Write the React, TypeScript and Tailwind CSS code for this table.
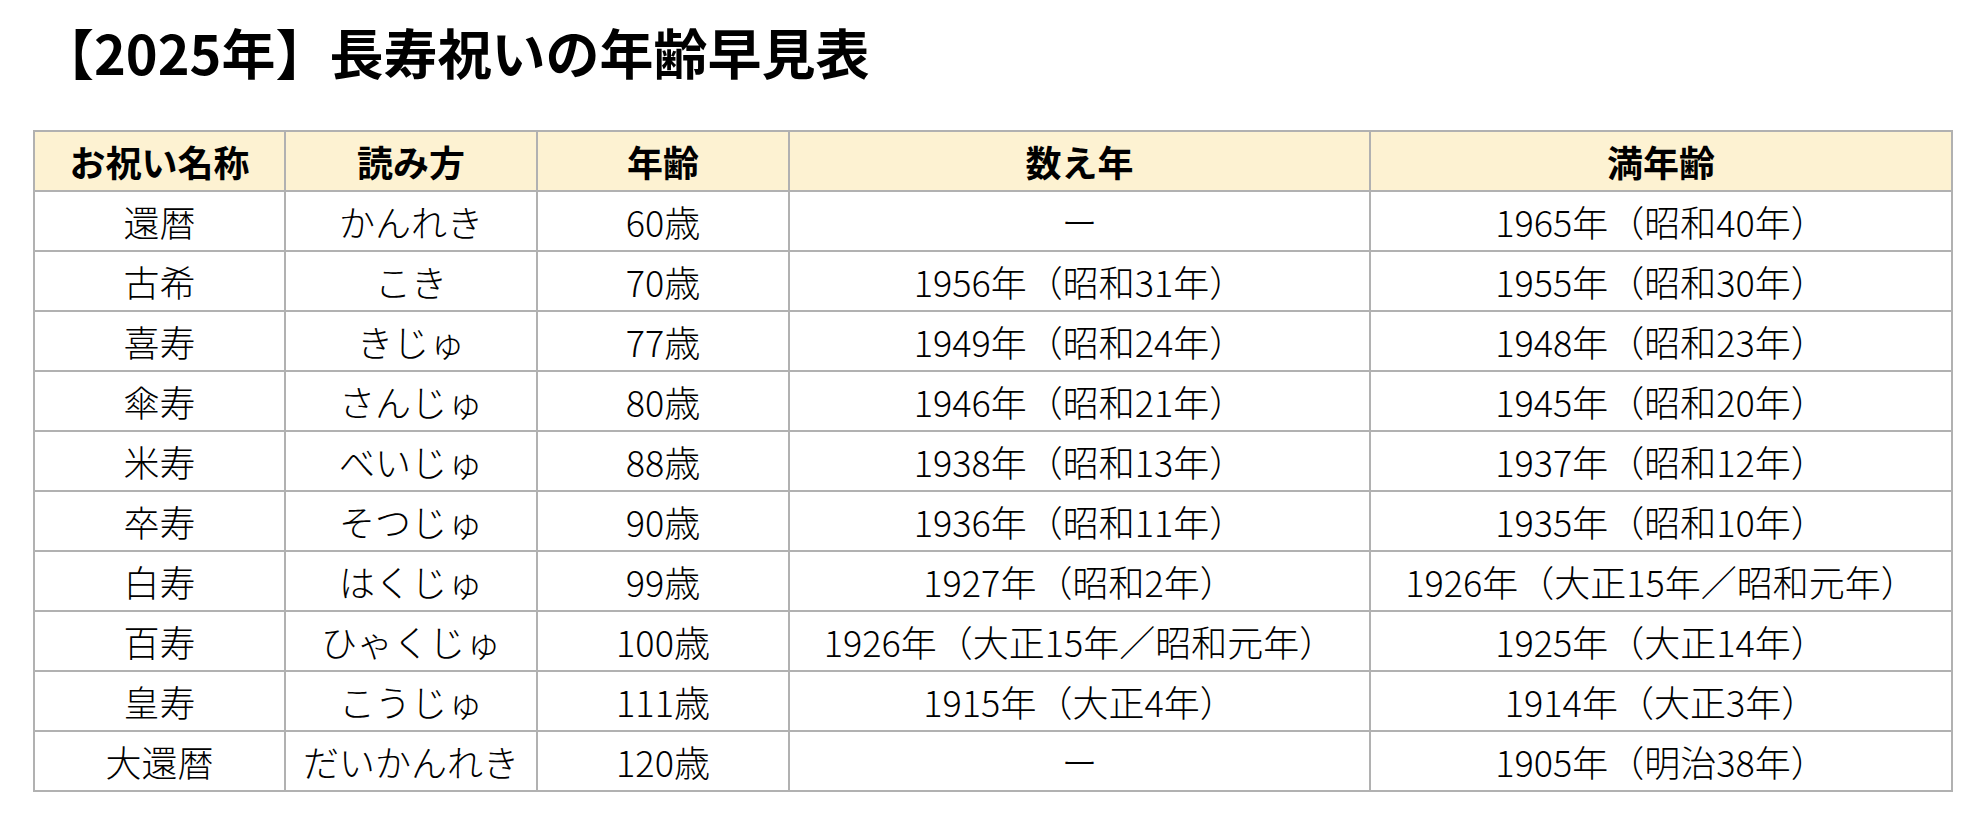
import React from "react";

type Row = {
  name: string;
  reading: string;
  age: string;
  kazoe: string;
  man: string;
};

const rows: Row[] = [
  { name: "還暦", reading: "かんれき", age: "60歳", kazoe: "ー", man: "1965年（昭和40年）" },
  { name: "古希", reading: "こき", age: "70歳", kazoe: "1956年（昭和31年）", man: "1955年（昭和30年）" },
  { name: "喜寿", reading: "きじゅ", age: "77歳", kazoe: "1949年（昭和24年）", man: "1948年（昭和23年）" },
  { name: "傘寿", reading: "さんじゅ", age: "80歳", kazoe: "1946年（昭和21年）", man: "1945年（昭和20年）" },
  { name: "米寿", reading: "べいじゅ", age: "88歳", kazoe: "1938年（昭和13年）", man: "1937年（昭和12年）" },
  { name: "卒寿", reading: "そつじゅ", age: "90歳", kazoe: "1936年（昭和11年）", man: "1935年（昭和10年）" },
  { name: "白寿", reading: "はくじゅ", age: "99歳", kazoe: "1927年（昭和2年）", man: "1926年（大正15年／昭和元年）" },
  { name: "百寿", reading: "ひゃくじゅ", age: "100歳", kazoe: "1926年（大正15年／昭和元年）", man: "1925年（大正14年）" },
  { name: "皇寿", reading: "こうじゅ", age: "111歳", kazoe: "1915年（大正4年）", man: "1914年（大正3年）" },
  { name: "大還暦", reading: "だいかんれき", age: "120歳", kazoe: "ー", man: "1905年（明治38年）" },
];

const headers = ["お祝い名称", "読み方", "年齢", "数え年", "満年齢"];

function Cell({ children, head = false }: { children: React.ReactNode; head?: boolean }) {
  return (
    <div
      className={`flex h-[60px] items-center justify-center whitespace-nowrap border-b-2 border-r-2 border-[#b1b1b1] text-[36px] leading-none ${
        head ? "bg-[#fdf2d2] font-bold" : "bg-white font-light"
      }`}
    >
      {children}
    </div>
  );
}

export default function App() {
  return (
    <div
      className="min-h-[828px] w-[1988px] bg-white pt-[25px] text-black"
      style={{ fontFamily: '"Noto Sans CJK JP", "Noto Sans", sans-serif' }}
    >
      {/* Page title */}
      <h1 className="mb-[51px] pl-[40px] text-[54px] font-bold leading-[54px]">
        【2025年】長寿祝いの年齢早見表
      </h1>

      {/* Age table — 5 columns, header + 10 rows */}
      <div className="ml-[33px] grid w-[1920px] grid-cols-[251px_252px_252px_581px_582px] border-l-2 border-t-2 border-[#b1b1b1]">
        {headers.map((h) => (
          <Cell key={h} head>
            {h}
          </Cell>
        ))}
        {rows.map((r) => (
          <React.Fragment key={r.name}>
            <Cell>{r.name}</Cell>
            <Cell>{r.reading}</Cell>
            <Cell>{r.age}</Cell>
            <Cell>{r.kazoe}</Cell>
            <Cell>{r.man}</Cell>
          </React.Fragment>
        ))}
      </div>
    </div>
  );
}
